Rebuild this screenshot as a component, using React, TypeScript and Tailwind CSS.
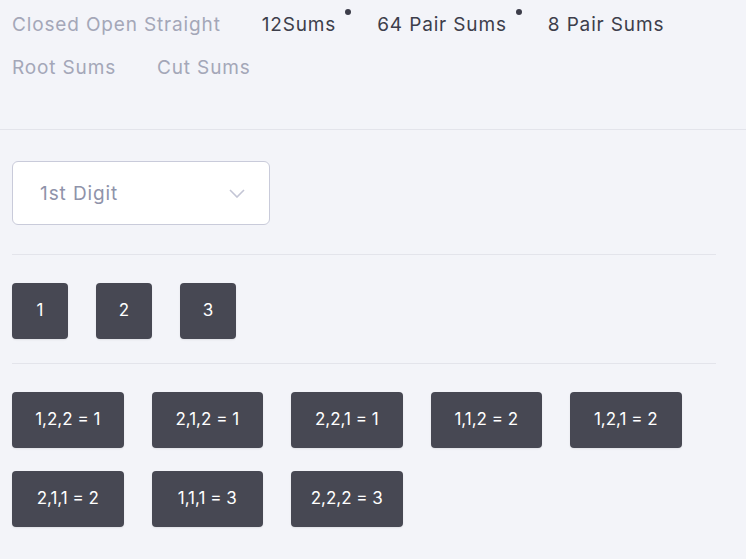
import React from "react";

const tabs = [
  { label: "Closed Open Straight", active: false, dot: false },
  { label: "12Sums", active: true, dot: true },
  { label: "64 Pair Sums", active: true, dot: true },
  { label: "8 Pair Sums", active: true, dot: false },
  { label: "Root Sums", active: false, dot: false },
  { label: "Cut Sums", active: false, dot: false },
];

const results = [
  "1,2,2 = 1",
  "2,1,2 = 1",
  "2,2,1 = 1",
  "1,1,2 = 2",
  "1,2,1 = 2",
  "2,1,1 = 2",
  "1,1,1 = 3",
  "2,2,2 = 3",
];

export default function App() {
  return (
    <div
      className="min-h-[559px] w-[746px] bg-[#f3f4f9]"
      style={{ fontFamily: "Inter, 'Noto Sans', sans-serif" }}
    >
      <div className="flex flex-wrap gap-x-[41px] gap-y-[17px] px-[12px] pt-[12px] pb-[48px]">
        {tabs.map((t) => (
          <div key={t.label} className="relative">
            <span
              className={
                "text-[19px] leading-[26px] tracking-[0.85px] " +
                (t.active ? "text-[#3d3e4b]" : "text-[#a4a7b8]")
              }
            >
              {t.label}
            </span>
            {t.dot && (
              <span className="absolute -right-[15px] top-[-3px] h-[6px] w-[6px] rounded-full bg-[#3c3d4a]" />
            )}
          </div>
        ))}
      </div>
      <div className="h-px bg-[#e3e4eb]" />
      <div className="w-[704px] ml-[12px] pt-[31px]">
        <div className="flex h-[64px] w-[258px] items-center justify-between rounded-[6px] border border-[#c9cbda] bg-white pl-[27px] pr-[24px]">
          <span className="pt-[3px] text-[19px] tracking-[0.9px] text-[#8f93aa]">1st Digit</span>
          <svg width="16" height="9" viewBox="0 0 16 9" fill="none">
            <path d="M1 1l7 7 7-7" stroke="#c3c5d5" strokeWidth="1.6" />
          </svg>
        </div>
        <div className="mt-[29px] h-px bg-[#e3e4eb]" />
        <div className="flex gap-[28px] pt-[28px] pb-[24px]">
          {["1", "2", "3"].map((n) => (
            <div
              key={n}
              className="flex h-[56px] w-[56px] items-center justify-center rounded-[4px] bg-[#474853] text-[17px] text-white shadow-[0_1px_2px_rgba(0,0,0,0.08)]"
            >
              {n}
            </div>
          ))}
        </div>
        <div className="h-px bg-[#e3e4eb]" />
        <div className="flex flex-wrap gap-x-[28px] gap-y-[23px] pt-[28px]">
          {results.map((r) => (
            <div
              key={r}
              className="flex h-[56px] w-[111.5px] items-center justify-center rounded-[4px] bg-[#474853] text-[17px] text-white shadow-[0_1px_2px_rgba(0,0,0,0.08)]"
            >
              {r}
            </div>
          ))}
        </div>
      </div>
    </div>
  );
}
